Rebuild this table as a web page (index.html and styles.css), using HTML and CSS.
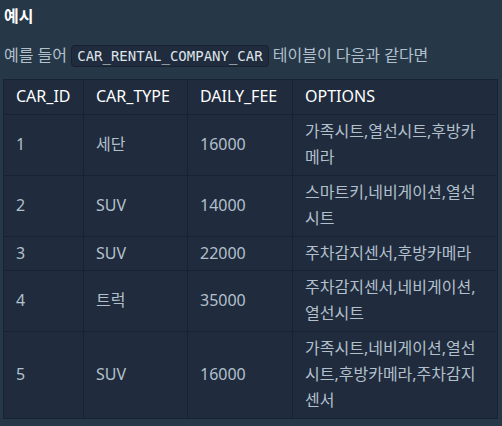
FILE: index.html
```html
<!DOCTYPE html>
<html lang="ko">
<head>
<meta charset="utf-8">
<link rel="stylesheet" href="styles.css">
</head>
<body>
<div class="page">
  <h5 class="title">예시</h5>
  <p class="lead">예를 들어 <code class="code">CAR_RENTAL_COMPANY_CAR</code> 테이블이 다음과 같다면</p>
  <table class="data">
    <colgroup>
      <col class="c1"><col class="c2"><col class="c3"><col class="c4">
    </colgroup>
    <thead>
      <tr><th>CAR_ID</th><th>CAR_TYPE</th><th>DAILY_FEE</th><th>OPTIONS</th></tr>
    </thead>
    <tbody>
      <tr><td>1</td><td>세단</td><td>16000</td><td>가족시트,열선시트,후방카메라</td></tr>
      <tr><td>2</td><td>SUV</td><td>14000</td><td>스마트키,네비게이션,열선시트</td></tr>
      <tr><td>3</td><td>SUV</td><td>22000</td><td>주차감지센서,후방카메라</td></tr>
      <tr><td>4</td><td>트럭</td><td>35000</td><td>주차감지센서,네비게이션,열선시트</td></tr>
      <tr><td>5</td><td>SUV</td><td>16000</td><td>가족시트,네비게이션,열선시트,후방카메라,주차감지센서</td></tr>
    </tbody>
  </table>
</div>
</body>
</html>
```

FILE: styles.css
```css
html, body {
  margin: 0;
  padding: 0;
  background: #263747;
}
body {
  font-family: "Noto Sans", "Noto Sans CJK KR", sans-serif;
  color: #b2c0cc;
  font-size: 16px;
}
.page {
  padding: 4px 5px 0 3px;
}
.title {
  margin: 0;
  padding-left: 1px;
  font-size: 16px;
  font-weight: 700;
  line-height: 24px;
  color: #ffffff;
}
.lead {
  margin: 14px 0 0 0;
  padding-left: 1px;
  line-height: 26px;
  font-size: 16px;
}
.code {
  font-family: "DejaVu Sans Mono", monospace;
  font-size: 14px;
  color: #dde4ea;
  background: #202b3d;
  border: 1px solid #172130;
  border-radius: 4px;
  padding: 2px 5px;
}
.data {
  margin-top: 10px;
  width: 494px;
  border-collapse: collapse;
  background: #202b3d;
  table-layout: fixed;
  border: 1px solid #172334;
}
.c1 { width: 80px; }
.c2 { width: 104px; }
.c3 { width: 105px; }
.c4 { width: 205px; }
.data th, .data td {
  border: 1px solid #172334;
  padding: 4px 12px;
  line-height: 25.9px;
  text-align: left;
  vertical-align: middle;
}
.data th {
  color: #ffffff;
  font-weight: 400;
}
.data td {
  color: #b2c0cc;
}
```
